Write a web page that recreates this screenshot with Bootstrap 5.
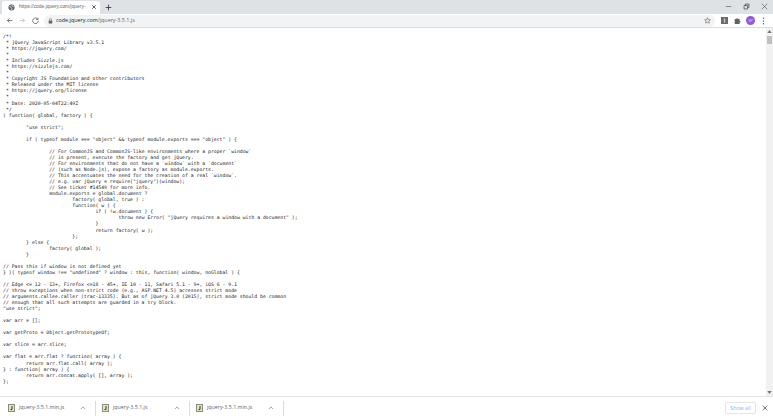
<!DOCTYPE html>
<html lang="en">
<head>
<meta charset="utf-8">
<title>jquery-3.5.1.js</title>
<link rel="stylesheet" href="https://cdn.jsdelivr.net/npm/bootstrap@5.3.0/dist/css/bootstrap.min.css">
<style>
html,body{height:100%;overflow:hidden;background:#fff}
body{font-family:"Open Sans","Liberation Sans",sans-serif;color:#3c4043}
.shell{width:773px;height:419px}
.tabbar{height:14px;background:#dee1e6;padding:1px 0 0 2px}
.chrome-tab{width:98px;height:13px;background:#fff;border-radius:3px 3px 0 0;padding:0 3px 1px 6px;font-family:"Liberation Sans",sans-serif;font-size:4.9px;color:#5f6368;gap:4px}
.tab-label{white-space:nowrap}
.newtab{width:16px;height:12px}
.winbtn{width:18px;height:10px}
.toolbar{height:14px;background:#fff;border-bottom:1px solid #dadce0;padding:0 3px 0 3px}
.navbtn{width:13px}
.omnibox{height:12px;background:#f1f3f4;border-radius:6px;margin:0 3px 0 2px;padding:0 4px;font-size:5.4px;color:#5f6368;gap:3px}
.omni-host{color:#202124}
.extbtn{width:13px}
.avatar{width:9px;height:9px;border-radius:50%;background:#8e5bd0;color:#e8dcf8;font-size:3.5px;line-height:9px;text-align:center}
.viewport{min-height:0}
.codepane{min-width:0;overflow:hidden;padding:6px 0 0 3px}
.codetext{margin:0;font-family:"DejaVu Sans Mono","Liberation Mono",monospace;font-size:4.8px;line-height:6.045px;tab-size:8;color:#222;overflow:visible;white-space:pre}
.scrolltrack{width:7px;background:#f1f1f1;padding:2px 1px}
.scrollthumb{height:8px;background:#c1c1c1;margin-top:3px}
.shelf{height:23px;background:#fff;border-top:1px solid #e4e5e7;padding:0 3px 0 0;font-size:5.3px;color:#5f6368}
.dl-item{height:15px;border-right:1px solid #dadce0;padding:0 5px 0 6px;gap:4px}
.dl-one{width:96px;padding-left:8px}
.dl-two{width:94px}
.showall{width:31px;height:12px;border:1px solid #e3e5e8;border-radius:2px;color:#8ab0f0;font-size:5.3px;line-height:10px;text-align:center;margin-right:4px;box-shadow:0 0 1px #e8e8e8}
.closeshelf{width:10px}
svg{display:block;flex:none}
</style>
</head>
<body>
<div class="shell d-flex flex-column">
  <div class="tabbar d-flex align-items-start">
    <div class="chrome-tab d-flex align-items-center">
      <svg width="7" height="7" viewBox="0 0 16 16"><circle cx="8" cy="8" r="7" fill="#5f6368"/><path d="M3 5l3 1 1 3 2 1-1 4M9 2l1 3 3 1" stroke="#fff" stroke-width="1.5" fill="none"/></svg>
      <span class="tab-label">https://code.jquery.com/jquery-</span>
      <svg class="ms-auto" width="6" height="6" viewBox="0 0 10 10"><path d="M2 2l6 6M8 2l-6 6" stroke="#3c4043" stroke-width="1.4"/></svg>
    </div>
    <div class="newtab d-flex justify-content-center align-items-center">
      <svg width="7" height="7" viewBox="0 0 10 10"><path d="M5 1v8M1 5h8" stroke="#3c4043" stroke-width="1.3"/></svg>
    </div>
    <div class="ms-auto d-flex">
      <div class="winbtn d-flex justify-content-center align-items-center"><svg width="7" height="7" viewBox="0 0 10 10"><path d="M1 5h8" stroke="#5f6368" stroke-width="1"/></svg></div>
      <div class="winbtn d-flex justify-content-center align-items-center"><svg width="7" height="7" viewBox="0 0 10 10"><path d="M1.5 3.5h5v5h-5zM3.5 3.5v-2h5v5h-2" stroke="#3c4043" stroke-width="1" fill="none"/></svg></div>
      <div class="winbtn d-flex justify-content-center align-items-center"><svg width="7" height="7" viewBox="0 0 10 10"><path d="M1 1l8 8M9 1l-8 8" stroke="#5f6368" stroke-width="1"/></svg></div>
    </div>
  </div>
  <div class="toolbar d-flex align-items-center">
    <div class="navbtn d-flex justify-content-center"><svg width="7" height="7" viewBox="0 0 10 10"><path d="M9 5H2M5 2L2 5l3 3" stroke="#5f6368" stroke-width="1.2" fill="none"/></svg></div>
    <div class="navbtn d-flex justify-content-center"><svg width="7" height="7" viewBox="0 0 10 10"><path d="M1 5h7M5 2l3 3-3 3" stroke="#bdc1c6" stroke-width="1.2" fill="none"/></svg></div>
    <div class="navbtn d-flex justify-content-center"><svg width="7" height="7" viewBox="0 0 10 10"><path d="M8.3 3.2A4 4 0 1 0 9 5.5M8.6 1v2.6H6" stroke="#5f6368" stroke-width="1.2" fill="none"/></svg></div>
    <div class="omnibox flex-grow-1 d-flex align-items-center">
      <svg width="5" height="6" viewBox="0 0 8 10"><path d="M2.3 4V2.8a1.7 1.7 0 0 1 3.4 0V4" stroke="#5f6368" fill="none"/><rect x="1" y="4" width="6" height="5" rx=".6" fill="#5f6368"/></svg>
      <span><span class="omni-host">code.jquery.com</span>/jquery-3.5.1.js</span>
      <svg class="ms-auto" width="7" height="7" viewBox="0 0 10 10"><path d="M5 1l1.2 2.7 2.9.3-2.2 1.9.7 2.9L5 7.3 2.4 8.8l.7-2.9L.9 4l2.9-.3z" stroke="#5f6368" fill="none" stroke-width=".9"/></svg>
    </div>
    <div class="extbtn d-flex justify-content-center"><svg width="7" height="7" viewBox="0 0 10 10"><rect width="10" height="10" fill="#6a6a6a"/><rect x="4" y="2" width="2" height="6" fill="#c9c9c9"/></svg></div>
    <div class="extbtn d-flex justify-content-center"><svg width="7" height="7" viewBox="0 0 10 10"><path d="M1 3h2.2a1.3 1.3 0 0 1 2.6 0H8v2.2a1.3 1.3 0 0 1 0 2.6V10H1z" fill="#5f6368"/></svg></div>
    <div class="extbtn d-flex justify-content-center"><div class="avatar">BY</div></div>
    <div class="extbtn d-flex justify-content-center"><svg width="3" height="8" viewBox="0 0 3 10"><circle cx="1.5" cy="1.5" r=".9" fill="#5f6368"/><circle cx="1.5" cy="5" r=".9" fill="#5f6368"/><circle cx="1.5" cy="8.5" r=".9" fill="#5f6368"/></svg></div>
  </div>
  <div class="viewport flex-grow-1 d-flex">
    <div class="codepane flex-grow-1">
<pre class="codetext">/*!
 * jQuery JavaScript Library v3.5.1
 * https://jquery.com/
 *
 * Includes Sizzle.js
 * https://sizzlejs.com/
 *
 * Copyright JS Foundation and other contributors
 * Released under the MIT license
 * https://jquery.org/license
 *
 * Date: 2020-05-04T22:49Z
 */
( function( global, factory ) {

	"use strict";

	if ( typeof module === "object" &amp;&amp; typeof module.exports === "object" ) {

		// For CommonJS and CommonJS-like environments where a proper `window`
		// is present, execute the factory and get jQuery.
		// For environments that do not have a `window` with a `document`
		// (such as Node.js), expose a factory as module.exports.
		// This accentuates the need for the creation of a real `window`.
		// e.g. var jQuery = require("jquery")(window);
		// See ticket #14549 for more info.
		module.exports = global.document ?
			factory( global, true ) :
			function( w ) {
				if ( !w.document ) {
					throw new Error( "jQuery requires a window with a document" );
				}
				return factory( w );
			};
	} else {
		factory( global );
	}

// Pass this if window is not defined yet
} )( typeof window !== "undefined" ? window : this, function( window, noGlobal ) {

// Edge &lt;= 12 - 13+, Firefox &lt;=18 - 45+, IE 10 - 11, Safari 5.1 - 9+, iOS 6 - 9.1
// throw exceptions when non-strict code (e.g., ASP.NET 4.5) accesses strict mode
// arguments.callee.caller (trac-13335). But as of jQuery 3.0 (2015), strict mode should be common
// enough that all such attempts are guarded in a try block.
"use strict";

var arr = [];

var getProto = Object.getPrototypeOf;

var slice = arr.slice;

var flat = arr.flat ? function( array ) {
	return arr.flat.call( array );
} : function( array ) {
	return arr.concat.apply( [], array );
};</pre>
    </div>
    <div class="scrolltrack d-flex flex-column">
      <svg width="5" height="3" viewBox="0 0 6 4"><path d="M3 0l3 4H0z" fill="#777"/></svg>
      <div class="scrollthumb"></div>
      <svg class="mt-auto" width="5" height="3" viewBox="0 0 6 4"><path d="M0 0h6L3 4z" fill="#777"/></svg>
    </div>
  </div>
  <div class="shelf d-flex align-items-center">
    <div class="dl-item dl-one d-flex align-items-center"><svg width="7" height="8" viewBox="0 0 7 8"><rect width="7" height="8" fill="#8a8a8a"/><rect x="1" y="1" width="5" height="6" fill="#e9e7b8"/><path d="M4 2v3.5H2.5" stroke="#333" fill="none"/></svg><span>jquery-3.5.1.min.js</span><svg class="ms-auto me-1" width="6" height="4" viewBox="0 0 8 5"><path d="M1 4l3-3 3 3" stroke="#80868b" fill="none"/></svg></div>
    <div class="dl-item dl-two d-flex align-items-center"><svg width="7" height="8" viewBox="0 0 7 8"><rect width="7" height="8" fill="#8a8a8a"/><rect x="1" y="1" width="5" height="6" fill="#e9e7b8"/><path d="M4 2v3.5H2.5" stroke="#333" fill="none"/></svg><span>jquery-3.5.1.js</span><svg class="ms-auto me-1" width="6" height="4" viewBox="0 0 8 5"><path d="M1 4l3-3 3 3" stroke="#80868b" fill="none"/></svg></div>
    <div class="dl-item dl-two d-flex align-items-center"><svg width="7" height="8" viewBox="0 0 7 8"><rect width="7" height="8" fill="#8a8a8a"/><rect x="1" y="1" width="5" height="6" fill="#e9e7b8"/><path d="M4 2v3.5H2.5" stroke="#333" fill="none"/></svg><span>jquery-3.5.1.min.js</span><svg class="ms-auto me-1" width="6" height="4" viewBox="0 0 8 5"><path d="M1 4l3-3 3 3" stroke="#80868b" fill="none"/></svg></div>
    <div class="showall ms-auto">Show all</div>
    <div class="closeshelf d-flex justify-content-center"><svg width="6" height="6" viewBox="0 0 10 10"><path d="M1 1l8 8M9 1l-8 8" stroke="#5f6368" stroke-width="1.4"/></svg></div>
  </div>
</div>
<script src="https://cdn.jsdelivr.net/npm/bootstrap@5.3.0/dist/js/bootstrap.bundle.min.js"></script>
</body>
</html>
